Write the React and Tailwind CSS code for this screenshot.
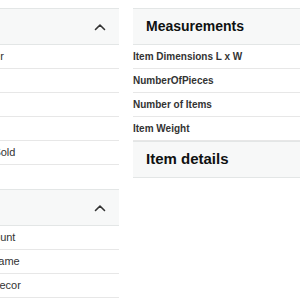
const topRows = ['Manufacturer', '', '', '', 'Total Units Sold'];
const bottomRows = ['Item Unit Count', 'Collection Name', 'Christmas Decor'];
const measureRows = ['Item Dimensions L x W', 'NumberOfPieces', 'Number of Items', 'Item Weight'];

function Chevron() {
    return (
        <svg width="12" height="8" viewBox="0 0 12 8" fill="none" stroke="#333" strokeWidth="1.6" strokeLinecap="round" strokeLinejoin="round">
            <path d="M1.5 6.5 L6 2 L10.5 6.5" />
        </svg>
    );
}

function Header({ title, chevron, size = 'text-[14px]' }) {
    return (
        <div className="h-[37px] flex items-center justify-between bg-[#f7f8f8] border-t border-b border-[#e3e6e6] pl-[13px] pr-[13px]">
            <span className={`${size} font-bold text-[#0f1111]`}>{title}</span>
            {chevron && <Chevron />}
        </div>
    );
}

function Row({ label, bold }) {
    return (
        <div className={`h-[24px] flex items-center border-b border-[#e7e7e7] whitespace-nowrap ${bold ? 'text-[10px] font-bold text-[#333]' : 'text-[11px] text-[#333]'}`}>
            {label}
        </div>
    );
}

export default function App() {
    return (
        <div className="flex gap-[14px] pt-2 bg-white min-h-[300px] font-['Liberation_Sans',Arial,sans-serif]">
            <div className="w-[180px] shrink-0 -ml-[61px]">
                <Header title="" chevron />
                {topRows.map((r, i) => <Row key={i} label={r} />)}
                <div className="mt-[24px]">
                    <Header title="" chevron />
                    {bottomRows.map((r, i) => <Row key={i} label={r} />)}
                </div>
            </div>
            <div className="flex-1 min-w-0">
                <Header title="Measurements" />
                {measureRows.map((r) => <Row key={r} label={r} bold />)}
                <Header title="Item details" size="text-[15px]" />
            </div>
        </div>
    );
}
